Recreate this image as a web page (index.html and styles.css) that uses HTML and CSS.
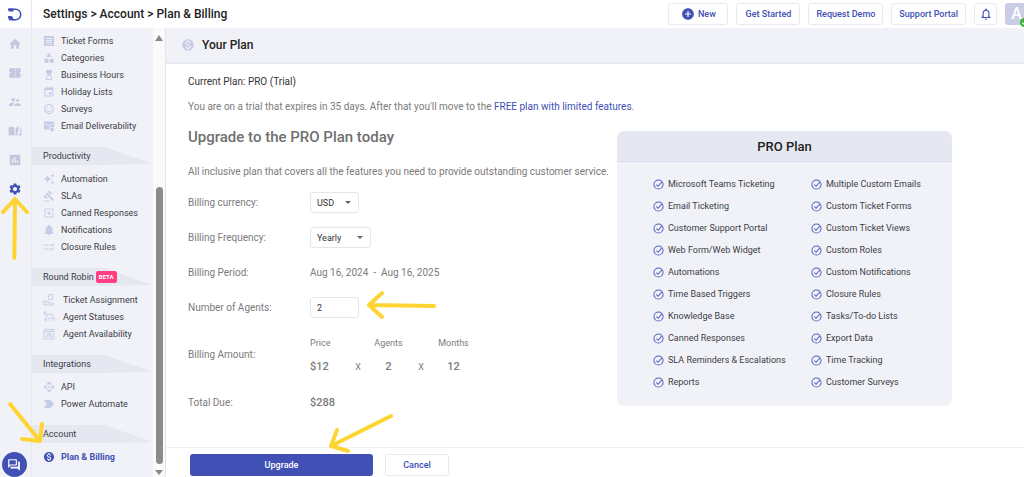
FILE: index.html
```
<!DOCTYPE html>
<html lang="en">
<head>
<meta charset="utf-8">
<title>Plan &amp; Billing</title>
<link rel="stylesheet" href="styles.css">
</head>
<body>
<svg class="defs" aria-hidden="true">
  <symbol id="home" viewBox="0 0 24 24"><path d="M10 20v-6h4v6h5v-8h3L12 3 2 12h3v8z"/></symbol>
  <symbol id="ticket" viewBox="0 0 24 24"><path d="M22 10V6c0-1.100-.9-2-2-2H4c-1.100 0-2 .9-2 2v4c1.100 0 2 .9 2 2s-.9 2-2 2v4c0 1.100.9 2 2 2h16c1.100 0 2-.9 2-2v-4c-1.100 0-2-.9-2-2s.9-2 2-2zm-9 7.500h-2v-2h2v2zm0-4.500h-2v-2h2v2zm0-4.500h-2v-2h2v2z"/></symbol>
  <symbol id="people" viewBox="0 0 24 24"><path d="M16.500 12c1.380 0 2.490-1.120 2.490-2.500S17.880 7 16.500 7 14 8.120 14 9.500s1.120 2.500 2.500 2.500zM9 11c1.660 0 2.990-1.340 2.990-3S10.660 5 9 5 6 6.340 6 8s1.340 3 3 3zm7.500 3c-1.830 0-5.500.92-5.500 2.750V19h11v-2.250c0-1.830-3.670-2.750-5.500-2.750zM9 13c-2.330 0-7 1.170-7 3.500V19h7v-2.250c0-.85.33-2.340 2.370-3.470C10.500 13.100 9.660 13 9 13z"/></symbol>
  <symbol id="book" viewBox="0 0 24 24"><path fill-rule="evenodd" d="M1 6c3-1.500 7-1.500 10 0v14c-3-1.400-7-1.400-10 0zM13 8l5-6v11l-3 3v2c2-.9 4-1.200 6-.9V6l2 .7V20c-3-1.400-7-1.400-10 0z"/></symbol>
  <symbol id="chart" viewBox="0 0 24 24"><path d="M19 3H5c-1.100 0-2 .9-2 2v14c0 1.100.9 2 2 2h14c1.100 0 2-.9 2-2V5c0-1.100-.9-2-2-2zM9 17H7v-7h2v7zm4 0h-2V7h2v10zm4 0h-2v-4h2v4z"/></symbol>
  <symbol id="gear" viewBox="0 0 24 24"><path d="M19.140 12.940c.04-.3.06-.61.06-.94s-.02-.64-.07-.94l2.030-1.580c.18-.14.23-.41.12-.61l-1.920-3.320c-.12-.22-.37-.29-.59-.22l-2.390.96c-.5-.38-1.030-.7-1.620-.94l-.36-2.540c-.04-.24-.24-.41-.48-.41h-3.840c-.24 0-.43.17-.47.41l-.36 2.540c-.59.24-1.130.57-1.620.94l-2.390-.96c-.22-.08-.47 0-.59.22L2.740 8.870c-.12.21-.08.47.12.61l2.030 1.580c-.05.3-.09.63-.09.94s.02.64.07.94l-2.030 1.580c-.18.14-.23.41-.12.61l1.920 3.320c.12.22.37.29.59.22l2.390-.96c.5.38 1.030.7 1.620.94l.36 2.540c.05.24.24.41.48.41h3.840c.24 0 .44-.17.47-.41l.36-2.540c.59-.24 1.130-.56 1.620-.94l2.390.96c.22.08.47 0 .59-.22l1.920-3.320c.12-.22.07-.47-.12-.61l-2.010-1.580zM12 15.600c-1.980 0-3.600-1.620-3.600-3.600s1.620-3.600 3.600-3.600 3.600 1.620 3.600 3.600-1.620 3.600-3.600 3.600z"/></symbol>
  <symbol id="forms" viewBox="0 0 24 24"><path fill-rule="evenodd" d="M2 2h20v20H2zM6 6v2h12V6zM6 10v2h12v-2zM6 14v2h12v-2zM6 18v1h12v-1z"/></symbol>
  <symbol id="shapes" viewBox="0 0 24 24"><path d="M12 1l5.500 9h-11zM17.500 13a4.500 4.500 0 1 1 0 9 4.500 4.500 0 0 1 0-9zM3 13.500h8v8H3z"/></symbol>
  <symbol id="hourglass" viewBox="0 0 24 24"><path d="M6 2v6l4 4-4 4v6h12v-6l-4-4 4-4V2zm10 14.500V20H8v-3.500l4-4z"/></symbol>
  <symbol id="calendar" viewBox="0 0 24 24"><path d="M17 12h-5v5h5v-5zM16 1v2H8V1H6v2H5c-1.110 0-2 .9-2 2v14c0 1.100.89 2 2 2h14c1.100 0 2-.9 2-2V5c0-1.100-.9-2-2-2h-1V1h-2zm3 18H5V8h14v11z"/></symbol>
  <symbol id="smile" viewBox="0 0 24 24"><path d="M11.990 2C6.470 2 2 6.480 2 12s4.470 10 9.990 10C17.520 22 22 17.520 22 12S17.520 2 11.990 2zM12 20c-4.420 0-8-3.580-8-8s3.580-8 8-8 8 3.580 8 8-3.580 8-8 8zm3.500-9c.83 0 1.500-.67 1.500-1.500S16.330 8 15.500 8 14 8.670 14 9.500s.67 1.500 1.500 1.500zm-7 0c.83 0 1.500-.67 1.500-1.500S9.330 8 8.500 8 7 8.670 7 9.500 7.670 11 8.500 11zM6 13.500c1 5.500 11 5.500 12 0l-1.500 0c-1 3.500-8 3.500-9 0z"/></symbol>
  <symbol id="mail" viewBox="0 0 24 24"><path fill-rule="evenodd" d="M22 3H2v16h11v-5h9zm-2 3v2l-8 5-8-5V6l8 5z"/><circle cx="18" cy="19" r="4"/></symbol>
  <symbol id="sparkle" viewBox="0 0 24 24"><path d="M19 9l1.250-2.750L23 5l-2.750-1.250L19 1l-1.250 2.750L15 5l2.750 1.250L19 9zm-7.500.5L9 4 6.500 9.500 1 12l5.500 2.500L9 20l2.500-5.500L17 12l-5.500-2.500zM19 15l-1.250 2.750L15 19l2.750 1.250L19 23l1.250-2.750L23 19l-2.750-1.250L19 15z"/></symbol>
  <symbol id="gavel" viewBox="0 0 24 24"><path d="M1 21h12v2H1v-2zM5.240 8.070l2.830-2.830 14.140 14.140-2.830 2.830L5.240 8.070zM12.320 1l5.660 5.660-2.830 2.830-5.660-5.660L12.320 1zM3.830 9.480l5.660 5.660-2.830 2.830L1 12.310l2.830-2.830z"/></symbol>
  <symbol id="canned" viewBox="0 0 24 24"><path d="M19 12v7H5V5h8V3H5a2 2 0 0 0-2 2v14a2 2 0 0 0 2 2h14a2 2 0 0 0 2-2v-7zM11 8v3H8v2h3v3h2v-3h3v-2h-3V8zM15 3h6v6h-2V5h-4z"/></symbol>
  <symbol id="bellfill" viewBox="0 0 24 24"><path d="M12 23c1.300 0 2.400-1 2.400-2H9.600c0 1 1.100 2 2.400 2zm7-6v-6c0-3.500-2-6.200-5.200-7V3.300a1.800 1.800 0 0 0-3.600 0V4C7 4.800 5 7.500 5 11v6l-2 2v1h18v-1z"/></symbol>
  <symbol id="rules" viewBox="0 0 24 24"><path d="M1 7h11v2H1zM1 15h11v2H1zM17.500 11.500L14 8l1.400-1.400 2.100 2.100L22 4.300l1.400 1.400zM17.500 19.500L14 16l1.400-1.400 2.100 2.100 4.500-4.400 1.400 1.400z"/></symbol>
  <symbol id="assign" viewBox="0 0 24 24"><g fill="none" stroke="currentColor" stroke-width="1.700"><path d="M11 1h9v10h-9zM14 4h3M1 14h5v8H1zM6 15h5l4 3h6v4H6M10 18h4"/></g></symbol>
  <symbol id="status" viewBox="0 0 24 24"><g fill="none" stroke="currentColor" stroke-width="1.900"><circle cx="4" cy="4" r="2.500"/><path d="M6 19v-5a8 8 0 0 1 16 0v6M10 19v-4c3 0 4-1 5-3 1 2 2 3 3 3v4M6 15H4v5h3M8 9l3-3"/></g></symbol>
  <symbol id="avail" viewBox="0 0 24 24"><g fill="none" stroke="currentColor" stroke-width="1.800"><path d="M2 3h20v19H2zM2 7h20M6 1v4M18 1v4M7 19v-4a5 5 0 0 1 10 0v4M10 18v-3l3-2 2 3v3"/></g></symbol>
  <symbol id="api" viewBox="0 0 24 24"><path d="M14 12l-2 2-2-2 2-2 2 2zm-2-6l2.120 2.120 2.500-2.500L12 1 7.380 5.620l2.500 2.500L12 6zm-6 6l2.120-2.120-2.500-2.500L1 12l4.620 4.620 2.500-2.500L6 12zm12 0l-2.120 2.120 2.500 2.500L23 12l-4.620-4.620-2.500 2.500L18 12zm-6 6l-2.120-2.120-2.500 2.500L12 23l4.620-4.620-2.500-2.500L12 18z"/></symbol>
  <symbol id="power" viewBox="0 0 24 24"><path d="M2 4h13l7 8-7 8H2l6-8z"/><path d="M2 4h8l6 8-6 8H2l6-8z" opacity=".45"/></symbol>
  <symbol id="coin" viewBox="0 0 24 24"><path d="M12 2C6.480 2 2 6.480 2 12s4.480 10 10 10 10-4.480 10-10S17.520 2 12 2zm1.410 16.090V20h-2.670v-1.930c-1.710-.36-3.160-1.460-3.270-3.400h1.960c.1 1.050.82 1.870 2.650 1.870 1.960 0 2.400-.98 2.400-1.590 0-.83-.44-1.610-2.670-2.140-2.480-.6-4.180-1.620-4.180-3.670 0-1.720 1.390-2.840 3.110-3.210V4h2.670v1.950c1.860.45 2.790 1.860 2.850 3.390H14.300c-.05-1.110-.64-1.870-2.220-1.870-1.500 0-2.400.68-2.400 1.640 0 .84.65 1.390 2.670 1.910s4.180 1.390 4.180 3.910c-.01 1.830-1.380 2.830-3.120 3.160z"/></symbol>
  <symbol id="plus" viewBox="0 0 24 24"><path d="M12 2C6.480 2 2 6.480 2 12s4.480 10 10 10 10-4.480 10-10S17.520 2 12 2zm5 11h-4v4h-2v-4H7v-2h4V7h2v4h4v2z"/></symbol>
  <symbol id="bell" viewBox="0 0 24 24"><path d="M12 22c1.100 0 2-.9 2-2h-4c0 1.100.89 2 2 2zm6-6v-5c0-3.070-1.640-5.640-4.500-6.320V4c0-.83-.67-1.500-1.500-1.500s-1.500.67-1.500 1.500v.68C7.630 5.360 6 7.920 6 11v5l-2 2v1h16v-1l-2-2zm-2 1H8v-6c0-2.480 1.510-4.500 4-4.500s4 2.020 4 4.500v6z"/></symbol>
  <symbol id="chat" viewBox="0 0 24 24"><path fill-rule="evenodd" d="M3 2h13c.55 0 1 .45 1 1v9c0 .55-.45 1-1 1H6l-4 4V3c0-.55.45-1 1-1zm1 2v8l1-1h10V4zM21 6c.55 0 1 .45 1 1v15l-4-4H7c-.55 0-1-.45-1-1v-2h13V6z"/></symbol>
  <symbol id="check" viewBox="0 0 24 24"><path d="M12 2a10 10 0 1 0 0 20 10 10 0 0 0 0-20zM7 12l4 4 8-9" fill="none" stroke="currentColor" stroke-width="2.200"/></symbol>
</svg>

<div class="app">
  <header class="topbar">
    <a class="logo" href="#" aria-label="Home">
      <svg viewBox="0 0 14 13"><path d="M1 1.200h6.500a5.200 5.200 0 0 1 0 10.500H4.500" fill="none" stroke="currentColor" stroke-width="1.500"/><path d="M0 .5h5.500v3H1.500C.5 3.500 0 2.500 0 .5zM0 8h2.500c1.500 0 3 1 3 4.400h-3C1 12.400 0 11 0 8z"/></svg>
    </a>
    <h1 class="crumbs">Settings &gt; Account &gt; Plan &amp; Billing</h1>
    <div class="actions">
      <button class="btn new"><svg><use href="#plus"/></svg>New</button>
      <button class="btn">Get Started</button>
      <button class="btn">Request Demo</button>
      <button class="btn">Support Portal</button>
      <button class="btn bell" aria-label="Notifications"><svg><use href="#bell"/></svg></button>
      <button class="avatar" aria-label="Profile">A<svg class="online" viewBox="0 0 10 10"><circle cx="5" cy="5" r="5"/><path d="M2.500 5l2 2 3-4" fill="none" stroke="#fff" stroke-width="1.200"/></svg></button>
    </div>
  </header>

  <nav class="rail" aria-label="Main">
    <a href="#" aria-label="Dashboard"><svg><use href="#home"/></svg></a>
    <a href="#" aria-label="Tickets"><svg><use href="#ticket"/></svg></a>
    <a href="#" aria-label="Contacts"><svg><use href="#people"/></svg></a>
    <a href="#" aria-label="Knowledge base"><svg><use href="#book"/></svg></a>
    <a href="#" aria-label="Reports"><svg><use href="#chart"/></svg></a>
    <a href="#" class="on" aria-label="Settings"><svg><use href="#gear"/></svg></a>
    <button class="chat" aria-label="Chat"><svg><use href="#chat"/></svg></button>
  </nav>

  <aside class="side">
    <nav class="menu" aria-label="Settings">
      <ul>
        <li><a href="#"><svg><use href="#forms"/></svg>Ticket Forms</a></li>
        <li><a href="#"><svg><use href="#shapes"/></svg>Categories</a></li>
        <li><a href="#"><svg><use href="#hourglass"/></svg>Business Hours</a></li>
        <li><a href="#"><svg><use href="#calendar"/></svg>Holiday Lists</a></li>
        <li><a href="#"><svg><use href="#smile"/></svg>Surveys</a></li>
        <li><a href="#"><svg><use href="#mail"/></svg>Email Deliverability</a></li>
      </ul>
      <h2>Productivity</h2>
      <ul>
        <li><a href="#"><svg><use href="#sparkle"/></svg>Automation</a></li>
        <li><a href="#"><svg><use href="#gavel"/></svg>SLAs</a></li>
        <li><a href="#"><svg><use href="#canned"/></svg>Canned Responses</a></li>
        <li><a href="#"><svg><use href="#bellfill"/></svg>Notifications</a></li>
        <li><a href="#"><svg><use href="#rules"/></svg>Closure Rules</a></li>
      </ul>
      <h2>Round Robin <span class="beta">BETA</span></h2>
      <ul class="wide">
        <li><a href="#"><svg><use href="#assign"/></svg>Ticket Assignment</a></li>
        <li><a href="#"><svg><use href="#status"/></svg>Agent Statuses</a></li>
        <li><a href="#"><svg><use href="#avail"/></svg>Agent Availability</a></li>
      </ul>
      <h2>Integrations</h2>
      <ul>
        <li><a href="#"><svg><use href="#api"/></svg>API</a></li>
        <li><a href="#"><svg><use href="#power"/></svg>Power Automate</a></li>
      </ul>
      <h2>Account</h2>
      <ul>
        <li><a href="#" class="current"><svg><use href="#coin"/></svg>Plan &amp; Billing</a></li>
      </ul>
    </nav>
    <div class="scrollbar" aria-hidden="true"><i class="up"></i><i class="thumb"></i><i class="down"></i></div>
  </aside>

  <main class="main">
    <div class="panel-head"><svg><use href="#coin"/></svg><h2>Your Plan</h2></div>
    <div class="content">
      <p class="plan">Current Plan: PRO (Trial)</p>
      <p class="trial">You are on a trial that expires in 35 days. After that you'll move to the <a href="#">FREE plan with limited features</a>.</p>
      <div class="cols">
        <form class="form" id="billing">
          <h3>Upgrade to the PRO Plan today</h3>
          <p class="intro">All inclusive plan that covers all the features you need to provide outstanding customer service.</p>
          <div class="row"><label for="cur">Billing currency:</label><span class="select usd"><select id="cur"><option>USD</option></select></span></div>
          <div class="row"><label for="freq">Billing Frequency:</label><span class="select"><select id="freq"><option>Yearly</option></select></span></div>
          <div class="row"><span>Billing Period:</span><span class="period"><span>Aug 16, 2024</span><span>-</span><span>Aug 16, 2025</span></span></div>
          <div class="row"><label for="agents">Number of Agents:</label><input id="agents" type="text" value="2"></div>
          <div class="row amount"><span>Billing Amount:</span>
            <div class="calc">
              <span>Price</span><span></span><span>Agents</span><span></span><span>Months</span>
              <b>$12</b><span>X</span><b>2</b><span>X</span><b>12</b>
            </div>
          </div>
          <div class="row"><span>Total Due:</span><b>$288</b></div>
        </form>
        <section class="card">
          <h3>PRO Plan</h3>
          <div class="features">
            <ul>
              <li><svg><use href="#check"/></svg>Microsoft Teams Ticketing</li>
              <li><svg><use href="#check"/></svg>Email Ticketing</li>
              <li><svg><use href="#check"/></svg>Customer Support Portal</li>
              <li><svg><use href="#check"/></svg>Web Form/Web Widget</li>
              <li><svg><use href="#check"/></svg>Automations</li>
              <li><svg><use href="#check"/></svg>Time Based Triggers</li>
              <li><svg><use href="#check"/></svg>Knowledge Base</li>
              <li><svg><use href="#check"/></svg>Canned Responses</li>
              <li><svg><use href="#check"/></svg>SLA Reminders &amp; Escalations</li>
              <li><svg><use href="#check"/></svg>Reports</li>
            </ul>
            <ul>
              <li><svg><use href="#check"/></svg>Multiple Custom Emails</li>
              <li><svg><use href="#check"/></svg>Custom Ticket Forms</li>
              <li><svg><use href="#check"/></svg>Custom Ticket Views</li>
              <li><svg><use href="#check"/></svg>Custom Roles</li>
              <li><svg><use href="#check"/></svg>Custom Notifications</li>
              <li><svg><use href="#check"/></svg>Closure Rules</li>
              <li><svg><use href="#check"/></svg>Tasks/To-do Lists</li>
              <li><svg><use href="#check"/></svg>Export Data</li>
              <li><svg><use href="#check"/></svg>Time Tracking</li>
              <li><svg><use href="#check"/></svg>Customer Surveys</li>
            </ul>
          </div>
        </section>
      </div>
    </div>
    <footer class="foot">
      <button class="upgrade" form="billing" type="button">Upgrade</button>
      <button class="btn" type="button">Cancel</button>
    </footer>
  </main>
</div>

<svg class="arrows" viewBox="0 0 1024 477" aria-hidden="true">
  <path d="M14.300 258L15 199M3 212l12-13 12 13"/>
  <path d="M10 404l30 37M42 424l-2 17-18-2"/>
  <path d="M434 306l-65-1M382 293l-13 12 13 12"/>
  <path d="M391 416l-60 30M337 430l-6 16 17 5"/>
</svg>
</body>
</html>
```
FILE: styles.css
```
* { box-sizing: border-box; }
body, h1, h2, h3, p, ul { margin: 0; padding: 0; }
ul { list-style: none; }
a { color: inherit; text-decoration: none; }
button, input, select { font: inherit; color: inherit; }
button { cursor: pointer; }
svg { fill: currentColor; flex: none; }

body {
  font: 10px/16px Roboto, "Liberation Sans", sans-serif;
  color: #3b3d45;
  background: #fff;
}
.defs { display: none; }

.app {
  display: grid;
  grid-template: 28px minmax(0, 1fr) / 32px 134px minmax(0, 1fr);
  height: 100vh;
  overflow: hidden;
}

/* Top bar */
.topbar {
  grid-column: 1 / -1;
  display: flex;
  align-items: center;
  overflow: hidden;
}
.logo {
  display: flex;
  align-items: center;
  width: 32px;
  height: 28px;
  padding-left: 8px;
  border-right: 1px solid #e8e9f2;
  color: #4050b5;
}
.logo svg { width: 14px; height: 13px; }
.crumbs {
  padding-left: 11px;
  font-size: 12px;
  font-weight: 500;
  color: #222;
}
.actions {
  display: flex;
  align-items: center;
  gap: 8px;
  margin: 0 -4px 0 auto;
}
.btn {
  display: flex;
  align-items: center;
  justify-content: center;
  gap: 3px;
  min-width: 64px;
  height: 22px;
  padding: 0 7px;
  border: 1px solid #e9e9ee;
  border-radius: 3px;
  background: #fff;
  color: #4050b5;
  font-size: 9px;
  font-weight: 500;
}
.btn.new { min-width: 60px; }
.btn.bell { min-width: 23px; padding: 0; }
.btn svg, .chat svg, .panel-head svg { width: 14px; height: 14px; }
.avatar {
  position: relative;
  width: 23px;
  height: 22px;
  padding: 0;
  border: 0;
  border-radius: 3px;
  background: #c9cde6;
  color: #fff;
  font-size: 16px;
  font-weight: 500;
}
.online {
  position: absolute;
  right: -1px;
  bottom: -2px;
  width: 9px;
  height: 9px;
  color: #3cb034;
}

/* Icon rail */
.rail {
  display: flex;
  flex-direction: column;
  align-items: center;
  gap: 15px;
  padding: 9px 3px 0 0;
  background: #f1f2f8;
  border-right: 1px solid #e8e9f2;
  color: #c3c8e0;
}
.rail a { display: flex; padding-left: 2px; }
.rail svg { width: 14px; height: 14px; }
.rail .on { color: #4050b5; }
.chat {
  display: flex;
  align-items: center;
  justify-content: center;
  width: 25px;
  height: 25px;
  margin-top: auto;
  flex: none;
  padding: 0;
  border: 0;
  border-radius: 50%;
  background: #4050b5;
  color: #fff;
}

/* Settings menu */
.side {
  display: flex;
  background: #f1f2f8;
  border-right: 1px solid #e1e3ee;
  overflow: hidden;
}
.menu { flex: 1; padding-top: 4px; font-size: 9px; }
.menu a {
  display: flex;
  align-items: center;
  gap: 6px;
  height: 17px;
  padding-left: 11px;
  white-space: nowrap;
}
.menu svg { width: 12px; height: 12px; color: #c6cbe6; }
.menu .wide a { gap: 8px; }
.menu .current { color: #4050b5; font-weight: 700; }
.menu .current svg { color: #4050b5; }
.menu h2 {
  position: relative;
  z-index: 0;
  display: flex;
  align-items: center;
  gap: 2px;
  height: 18px;
  margin: 13px 0 5px;
  padding-left: 11px;
  font-size: 9px;
  font-weight: 400;
}
.menu h2::before {
  content: "";
  position: absolute;
  z-index: -1;
  inset: 0;
  background: #e6e8f1;
  clip-path: polygon(0 0, 60% 0, 100% 94%, 60% 100%, 0 100%);
}
.beta {
  padding: 0 3px;
  border-radius: 2px;
  background: #ff3d80;
  color: #fff;
  font-size: 6px;
  font-weight: 700;
  line-height: 12px;
}
.scrollbar {
  display: flex;
  flex-direction: column;
  align-items: center;
  width: 12px;
  padding: 7px 0 2px;
  background: #fafafa;
}
.up, .down { border: 4px solid transparent; }
.up { border-top: 0; border-bottom: 6px solid #888; }
.down { border-bottom: 0; border-top: 5px solid #888; }
.thumb {
  width: 7px;
  height: 63%;
  margin: auto 0 6px;
  border-radius: 4px;
  background: #8b8b8b;
}

/* Main panel */
.main { display: flex; flex-direction: column; min-width: 0; }
.panel-head {
  display: flex;
  align-items: center;
  gap: 7px;
  height: 36px;
  flex: none;
  padding-left: 15px;
  background: #f1f2f8;
  border-bottom: 2px solid #e8e9f5;
}
.panel-head svg { color: #c9cde6; }
.panel-head h2 { font-size: 12px; font-weight: 500; color: #222; }
.content { flex: 1; padding: 10px 72px 0 22px; color: #7b7b7b; }
.plan { color: #333; }
.trial { margin-top: 9px; }
.trial a { color: #4050b5; }
.cols {
  display: grid;
  grid-template-columns: minmax(0, 1fr) minmax(0, 335px);
  gap: 16px;
  align-items: start;
  margin-top: 16px;
}
.form h3 { font-size: 15px; font-weight: 500; line-height: 12px; color: #707070; }
.intro { margin: 21px 0 5px; white-space: nowrap; }
.row {
  display: grid;
  grid-template-columns: 122px 1fr;
  align-items: center;
  justify-items: start;
  height: 35px;
}
.form b { font-size: 11px; font-weight: 500; }
.select { position: relative; width: 61px; }
.usd { width: 49px; }
.select::after {
  content: "";
  position: absolute;
  top: 9px;
  right: 8px;
  border: 3px solid transparent;
  border-top-color: #666;
  border-bottom: 0;
  pointer-events: none;
}
.select select, .row input {
  display: block;
  width: 100%;
  height: 21px;
  padding: 0 6px;
  border: 1px solid #e6e6ea;
  border-radius: 3px;
  background: #fff;
  color: #333;
  font-size: 9px;
  appearance: none;
}
.row input { width: 49px; }
.period { display: flex; gap: 5px; }
.amount { height: 60px; }
.calc {
  display: grid;
  grid-template-columns: 32px 32px 29px 36px 29px;
  row-gap: 8px;
  justify-items: center;
  font-size: 9px;
}
.calc > :nth-child(5n + 1) { justify-self: start; }

/* Feature card */
.card { border-radius: 7px; overflow: hidden; background: #f1f2f8; color: #3b3d45; }
.card h3 {
  height: 31px;
  border-bottom: 1px solid #d9dcea;
  background: #e6e8f1;
  color: #222;
  font-size: 13px;
  font-weight: 500;
  line-height: 31px;
  text-align: center;
}
.features {
  display: grid;
  grid-template-columns: 1fr 1fr;
  column-gap: 18px;
  padding: 11px 1px 13px 36px;
  font-size: 9px;
}
.features li { display: flex; align-items: center; gap: 4px; height: 22px; white-space: nowrap; }
.features svg { width: 11px; height: 11px; color: #5563c0; }

/* Footer actions */
.foot {
  display: flex;
  gap: 12px;
  flex: none;
  padding: 6px 24px 1px;
  border-top: 1px solid #f0f0f3;
}
.upgrade {
  width: 183px;
  height: 22px;
  border: 0;
  border-radius: 3px;
  background: #4050b5;
  color: #fff;
  font-size: 9px;
  font-weight: 500;
}

/* Callout arrows laid over the page */
.arrows {
  position: absolute;
  top: 0;
  left: 0;
  width: 1024px;
  height: 477px;
  fill: none;
  stroke: #fdd432;
  stroke-width: 4;
  stroke-linecap: round;
  stroke-linejoin: round;
  pointer-events: none;
}
```
